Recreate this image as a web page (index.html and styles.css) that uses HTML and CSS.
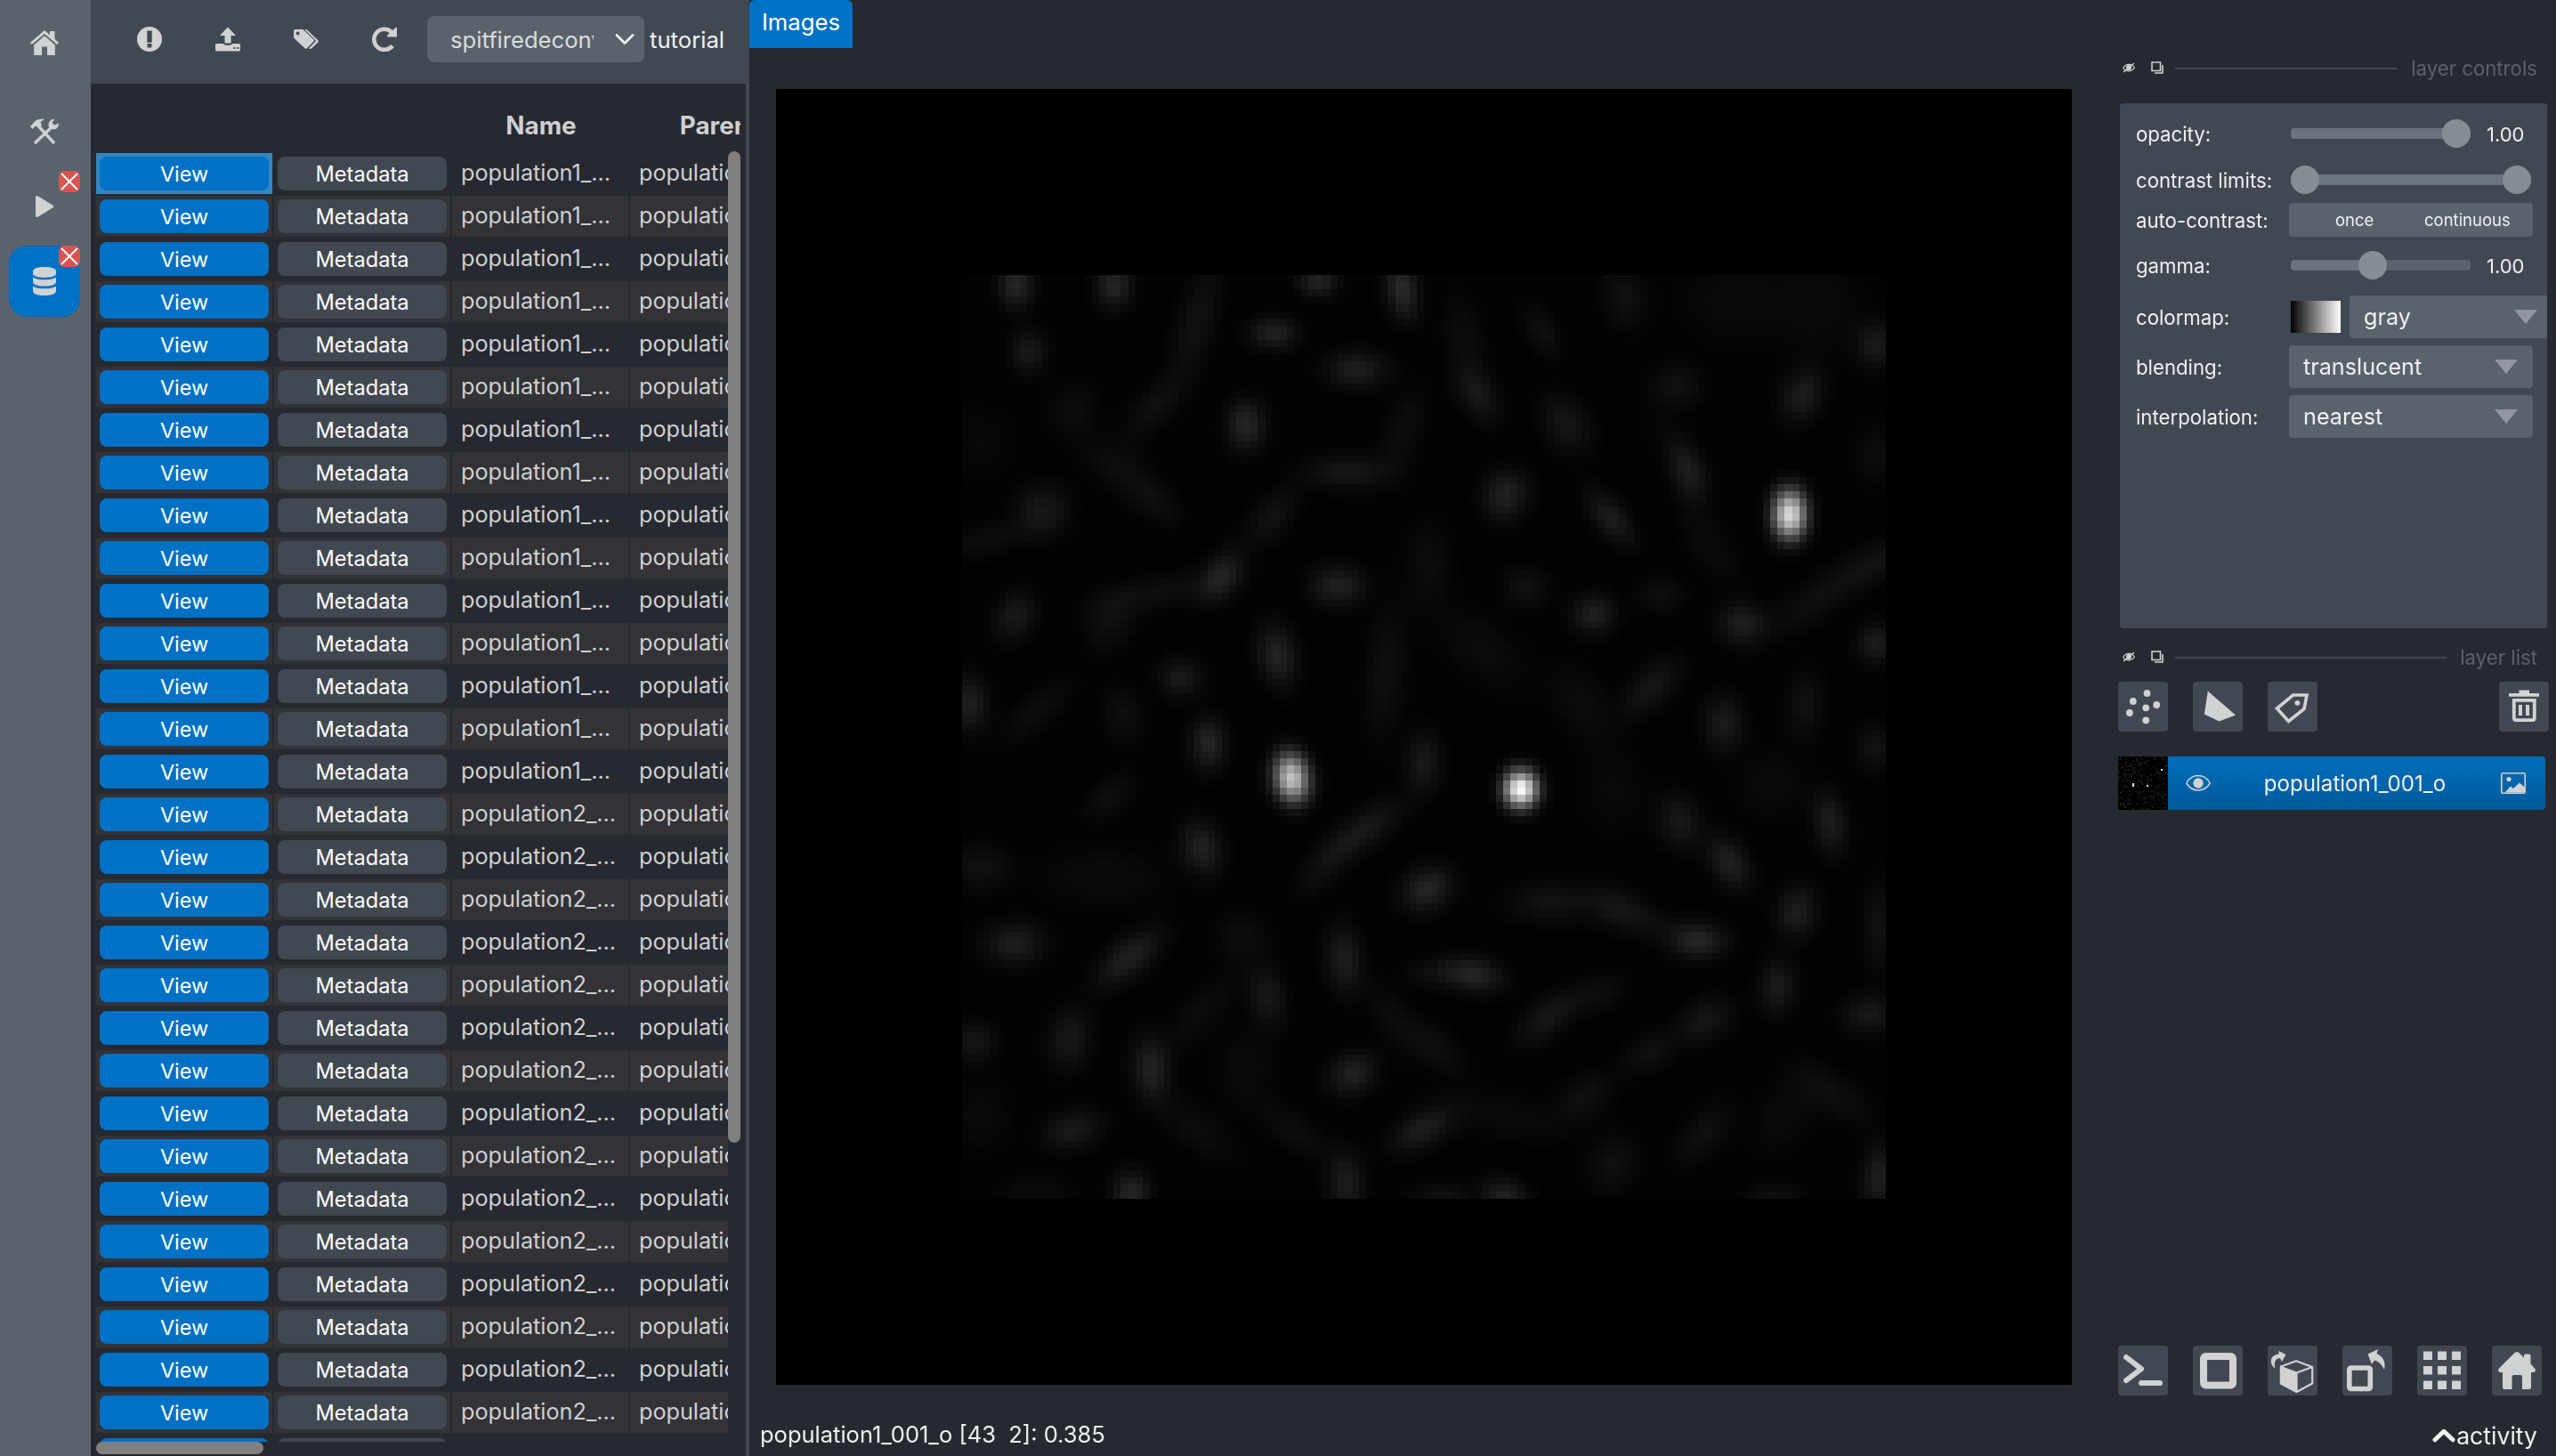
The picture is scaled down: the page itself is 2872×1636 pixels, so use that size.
FILE: index.html
```html
<!DOCTYPE html>
<html lang="en">
<head>
<meta charset="utf-8">
<title>Images</title>
<link rel="stylesheet" href="styles.css">
</head>
<body>
<nav class="sidebar">
  <div class="side-item side-home">
    <svg width="32" height="28" viewBox="0 0 32 28"><path d="M16 0l6 5.2V1h5.500v9l4.500 4-1.800 2L16 4 1.800 16 0 14z"/><path d="M16 6.200L27.800 16.500V28H19V18.500h-6V28H4.200V16.500z"/></svg>
  </div>
  <div class="side-item side-tools">
    <svg width="32" height="30" viewBox="0 0 32 30"><path d="M0 9L6 2.500Q10 .2 16 1l-4.500 3 1.500 4-3.500 3L6 8.500 2.500 12z"/><path d="M10 9.500L27 28M5 28L25 9" fill="none" stroke="#d0d0d2" stroke-width="3.400"/><path d="M27.500.8l-3 4.200 3 2.800 4.200-2.300c.8 4.500-2.700 8-8.200 6.500l-3-3C20 4 23.500.5 27.500.8z"/></svg>
  </div>
  <div class="side-item side-play">
    <span class="close"><svg width="24" height="24" viewBox="0 0 24 24"><path d="M3 3l18 18M21 3L3 21" stroke="#fff" stroke-width="2"/></svg></span>
    <svg width="20" height="24" viewBox="0 0 20 24"><path d="M0 0l3 .5 17 10.500v2L3 23.500 0 24z"/></svg>
  </div>
  <div class="side-item side-data">
    <span class="close"><svg width="24" height="24" viewBox="0 0 24 24"><path d="M3 3l18 18M21 3L3 21" stroke="#fff" stroke-width="2"/></svg></span>
    <svg width="26" height="32" viewBox="0 0 26 32"><path d="M0 4.500C0 2 5 0 13 0s13 2 13 4.500v2.800C26 10 21 12 13 12S0 10 0 7.300z"/><path d="M0 11.500C5 15.300 21 15.300 26 11.500v5.200C26 19.500 21 21.600 13 21.600S0 19.500 0 16.700zM0 21.500C5 25.300 21 25.300 26 21.500v5.500C26 30 21 32 13 32S0 30 0 27z"/></svg>
  </div>
</nav>

<section class="browser">
  <header class="toolbar">
    <div class="tools">
      <svg width="28" height="28" viewBox="0 0 28 28"><path fill-rule="evenodd" d="M14 0a14 14 0 1 1 0 28a14 14 0 1 1 0-28zM11.300 4.500v13.200h5.400V4.500zM11.600 19v4.600h4.800V19z"/></svg>
      <svg width="28" height="28" viewBox="0 0 28 28"><path d="M14 .5L23 10h-5.500v8.500h-7V10H5z"/><path fill-rule="evenodd" d="M1.500 19H9c.5 2.500 9.500 2.500 10 0h7.500q1.500 0 1.500 1.500v5.500q0 1.500-1.500 1.500h-25Q0 27.500 0 26v-5.500Q0 19 1.500 19zM20.500 23v2h2v-2zm4 0v2h2v-2z"/></svg>
      <svg width="28" height="22" viewBox="0 0 28 22"><path fill-rule="evenodd" d="M1.500 0H9.500q1 0 2 1l10.800 10.600q1 1 0 2.200l-7.500 7.500q-1 1-2.200 0L1 10.500Q0 9.500 0 8.500V1.500Q0 0 1.500 0zM4.600 2.600a2 2 0 1 0 .01 0z"/><path d="M12 0h1.500q1 0 2 1l11.800 11.200q1.200 1.200 0 2.400L20 21.600q-1 .8-2.200.2l-.5-.7 7.800-8z"/></svg>
      <svg width="28" height="28" viewBox="0 0 28 28"><path d="M23 21.500A11.600 11.600 0 1 1 22 6" fill="none" stroke="#d0d0d2" stroke-width="4.600"/><path d="M28 .8V11.500H17.500q-1.300-.6 0-2L26.500 1z"/></svg>
    </div>
    <div class="select"><span class="select-text">spitfiredeconvolution</span><svg width="22" height="12" viewBox="0 0 22 12"><path d="M2 1.500l9 9 9-9" fill="none" stroke="#f0f1f2" stroke-width="2.800" stroke-linecap="round" stroke-linejoin="round"/></svg></div>
    <span class="toolbar-label">tutorial</span>
  </header>
  <div class="table">
    <div class="thead"><span></span><span></span><span>Name</span><span>Parent</span></div>
    <div class="viewport">
      <div class="tbody" id="rows"></div>
      <div class="vscroll"><div class="vthumb"></div></div>
    </div>
    <div class="hscroll"><div class="hthumb"></div></div>
  </div>
</section>

<main class="viewer">
  <div class="tabs"><div class="tab">Images</div></div>
  <div class="canvas"><canvas class="picture" id="picture" width="128" height="128"></canvas></div>
  <div class="status">population1_001_o [43  2]: 0.385</div>
</main>

<aside class="panel">
  <div class="dock-title controls-title">
    <svg class="dock-eye" width="14" height="12" viewBox="0 0 14 12"><path d="M.7 6.500C3.500 1.200 10.500 1.200 13.300 6 10.500 11 3.500 11 .7 6.500z" fill="none" stroke="#d1d2d4" stroke-width="1.200"/><circle cx="7" cy="6" r="3"/><path d="M1 11L13 1" stroke="#d1d2d4" stroke-width="1.400"/></svg>
    <svg width="14" height="14" viewBox="0 0 14 14"><path d="M1 1h9.500v9.500H1zM4 13h9V4" fill="none" stroke="#d1d2d4" stroke-width="1.600"/></svg>
    <i class="rule"></i><span>layer controls</span>
  </div>
  <div class="controls">
    <div class="ctl r-opacity"><label>opacity:</label><div class="slider"><i class="knob end"></i></div><span class="num">1.00</span></div>
    <div class="ctl r-limits"><label>contrast limits:</label><div class="slider wide"><i class="knob"></i><i class="knob"></i></div></div>
    <div class="ctl r-auto"><label>auto-contrast:</label><div class="split"><span class="once">once</span><span class="cont">continuous</span></div></div>
    <div class="ctl r-gamma"><label>gamma:</label><div class="slider half"><i class="knob mid"></i></div><span class="num">1.00</span></div>
    <div class="ctl r-combo"><label>colormap:</label><i class="swatch"></i><div class="combo cut"><span>gray</span><i class="tri"></i></div></div>
    <div class="ctl r-combo"><label>blending:</label><div class="combo"><span>translucent</span><i class="tri"></i></div></div>
    <div class="ctl r-combo"><label>interpolation:</label><div class="combo"><span>nearest</span><i class="tri"></i></div></div>
  </div>
  <div class="dock-title list-title">
    <svg class="dock-eye" width="14" height="12" viewBox="0 0 14 12"><path d="M.7 6.500C3.500 1.200 10.500 1.200 13.300 6 10.500 11 3.500 11 .7 6.500z" fill="none" stroke="#d1d2d4" stroke-width="1.200"/><circle cx="7" cy="6" r="3"/><path d="M1 11L13 1" stroke="#d1d2d4" stroke-width="1.400"/></svg>
    <svg width="14" height="14" viewBox="0 0 14 14"><path d="M1 1h9.500v9.500H1zM4 13h9V4" fill="none" stroke="#d1d2d4" stroke-width="1.600"/></svg>
    <i class="rule"></i><span>layer list</span>
  </div>
  <div class="buttons list-buttons">
    <div class="btn"><svg viewBox="0 0 56 56"><circle cx="32.500" cy="13" r="3.900"/><circle cx="16.800" cy="22" r="3.900"/><circle cx="43.200" cy="26" r="3.900"/><circle cx="31.200" cy="29.300" r="3.900"/><circle cx="12.900" cy="35" r="3.900"/><circle cx="31.200" cy="43.300" r="3.900"/></svg></div>
    <div class="btn"><svg viewBox="0 0 56 56"><path d="M16.800 10.500L48 37.500 29.500 44.500 12.800 36.500z"/></svg></div>
    <div class="btn"><svg viewBox="0 0 56 56"><path d="M28.500 15H44l-3 15.500L23.500 44.500 10.500 30z" fill="none" stroke="#d1d2d4" stroke-width="3.600"/><circle cx="33.400" cy="23.800" r="2.900"/></svg></div>
    <div class="btn trash"><svg viewBox="0 0 56 56"><path d="M22.500 9.500h11.500v3.500h11v3.800H11V13h11.500zM22 26h4v12h-4zM30 26h4v12h-4z"/><path d="M16.800 20.800h23v20q0 2.300-2.300 2.300H19q-2.200 0-2.200-2.300z" fill="none" stroke="#d1d2d4" stroke-width="3.800"/></svg></div>
  </div>
  <div class="layer">
    <canvas class="thumb" id="thumb" width="28" height="30"></canvas>
    <svg class="eye" width="28" height="20" viewBox="0 0 28 20"><path d="M.8 10C7-1.200 21-1.200 27.200 10 21 20.500 7 20.500.8 10z" fill="none" stroke="#d1d2d4" stroke-width="1.500"/><circle cx="14" cy="10" r="5.700"/></svg>
    <span>population1_001_o</span>
    <svg width="28" height="24" viewBox="0 0 28 24"><rect x=".8" y=".8" width="26.400" height="22.400" rx="1.500" fill="none" stroke="#d1d2d4" stroke-width="1.600"/><circle cx="9" cy="7.500" r="2.600"/><path d="M4.500 22.500L11 15.500l3 2.500 7-6.500 6 5.500v5.500z"/></svg>
  </div>
  <div class="buttons viewer-buttons">
    <div class="btn"><svg viewBox="0 0 56 56"><path d="M9 13l17 13.200L9 39.200M26 42h21" fill="none" stroke="#d1d2d4" stroke-width="6" stroke-linecap="round" stroke-linejoin="round"/></svg></div>
    <div class="btn"><svg viewBox="0 0 56 56"><rect x="12" y="12" width="33" height="32.500" rx="2.500" fill="none" stroke="#d1d2d4" stroke-width="8"/></svg></div>
    <div class="btn"><svg viewBox="0 0 56 56"><path d="M8.500 26C1 20 2.500 10.500 12.500 9.500V6L20.500 10 16 18l-2-4c-5 0-7.500 5-5.500 12zM14 24.500L32.500 31v22L14 42.500z"/><path d="M14.800 23.500L32 17.200 50.200 24v18.500L32.500 52 14.800 42.500zM14.800 24L32.500 30.500 50.200 24M32.500 30.500V52" fill="none" stroke="#d1d2d4" stroke-width="2.200" stroke-linejoin="round"/></svg></div>
    <div class="btn"><svg viewBox="0 0 56 56"><rect x="7.800" y="25" width="23.500" height="23.500" rx="2" fill="none" stroke="#d1d2d4" stroke-width="5.600"/><path d="M28.500 9.500L40 4l-1.500 5C46 12 49 19 47 27 44 21 40.500 17.500 36 16.500L33 21z"/></svg></div>
    <div class="btn"><svg viewBox="0 0 56 56"><path d="M7 6.500h10v9.500H7zM23 6.500h10v9.500H23zM39 6.500h10v9.500H39zM7 23h10v9.500H7zM23 23h10v9.500H23zM39 23h10v9.500H39zM7 39.500h10V49H7zM23 39.500h10V49H23zM39 39.500h10V49H39z"/></svg></div>
    <div class="btn"><svg viewBox="0 0 56 56"><path d="M28 7q1.500 0 3 1.500l5 5V11q0-1.500 1.500-1.500h4.500q1.500 0 1.500 1.500v9.500l5 5.500q1.500 3.500-2 4H44v17q0 2-2 2H34V35q0-2-2-2h-7.500q-2 0-2 2v14H14q-2 0-2-2V30H9.500Q6 29.500 7.500 26L25 8.500Q26.500 7 28 7z"/></svg></div>
  </div>
  <div class="activity"><svg width="26" height="16" viewBox="0 0 26 16"><path d="M3 12.800L13 3.300l10 9.500" fill="none" stroke="#f0f1f2" stroke-width="5" stroke-linecap="round" stroke-linejoin="round"/></svg><span>activity</span></div>
</aside>
<script src="app.js"></script>
</body>
</html>
```
FILE: styles.css
```css
* { box-sizing: border-box; margin: 0; padding: 0; }
body {
  display: flex;
  width: 2872px;
  height: 1636px;
  overflow: hidden;
  background: #262930;
  color: #f0f1f2;
  font-family: Inter, "Liberation Sans", sans-serif;
  font-size: 25.6px;
  white-space: nowrap;
}
svg { display: block; flex: none; fill: #d1d2d4; }

/* navigation strip */
.sidebar { width: 102px; flex: none; background: #5a626c; padding: 8px 10px 0; }
.side-item { position: relative; width: 80px; height: 80px; border-radius: 20px; display: flex; align-items: center; justify-content: center; }
.side-tools { margin-top: 20px; }
.side-play { margin-top: 4px; }
.side-data { margin-top: 4px; background: #0071c5; }
.close { position: absolute; right: 0; top: 0; width: 24px; height: 24px; border-radius: 6px; background: #d9534f; }

/* data browser */
.browser { width: 740px; flex: none; display: flex; flex-direction: column; }
.toolbar { height: 94px; flex: none; background: #414851; display: flex; align-items: flex-start; padding: 18px 0 0 52px; }
.tools { display: flex; gap: 60px; width: 326px; height: 52px; align-items: center; }
.select { width: 244px; height: 52px; border-radius: 8px; background: #5a626c; display: flex; align-items: center; justify-content: space-between; padding: 0 11px 0 26px; }
.select-text { width: 161px; overflow: hidden; line-height: 53px; font-size: 25.6px; color: #dcddde; }
.toolbar-label { line-height: 53px; padding-left: 6px; font-size: 25.7px; }
.table { flex: 1; min-height: 0; border-right: 4px solid #414851; padding-left: 6px; overflow: hidden; }
.thead { display: grid; grid-template-columns: 198px 202px 200px 200px; width: 724px; height: 76px; overflow: hidden; font-weight: 700; font-size: 27.8px; line-height: 95px; text-align: center; color: #d0d0d1; }
.viewport { display: flex; width: 724px; height: 1450px; overflow: hidden; }
.tbody { width: 710px; overflow: hidden; padding-top: 2px; }
.row { display: grid; grid-template-columns: 198px 198px 198px 198px; gap: 2px; height: 46px; margin-bottom: 2px; }
.cell { padding: 4px; line-height: 44px; color: #d0d0d1; }
.row.alt .cell { background: #323237; }
.row .cell.current { background: #3485c0; }
.cell.name { padding: 0 0 0 10px; font-size: 25.2px; }
.button { height: 38px; width: 190px; border-radius: 8px; background: #414851; color: #fff; text-align: center; line-height: 39px; font-size: 23.6px; }
.button.view { background: #0071c5; font-size: 23.4px; }
.vthumb { width: 14px; height: 1114px; border-radius: 7px; background: #808080; }
.hthumb { width: 188px; height: 14px; border-radius: 7px; background: #808080; }

/* image viewer */
.viewer { width: 1534px; flex: none; display: flex; flex-direction: column; }
.tabs { height: 100px; display: flex; }
.tab { width: 116px; height: 54px; background: #0071c5; border-radius: 6px 6px 0 0; text-align: center; line-height: 50px; font-size: 25.7px; color: #fff; }
.canvas { width: 1456px; height: 1456px; margin-left: 30px; background: #000; padding: 209px 0 0 209px; }
.picture { display: block; width: 1038px; height: 1038px; image-rendering: pixelated; }
.status { padding-left: 12px; line-height: 112px; height: 80px; white-space: pre; font-size: 25.5px; }

/* docked panels */
.panel { width: 496px; flex: none; padding-top: 56px; display: flex; flex-direction: column; }
.dock-title { display: flex; align-items: center; height: 40px; padding: 0 21px 0 9px; color: #5a626c; font-size: 22.2px; }
.dock-eye { margin-right: 18px; }
.rule { flex: 1; height: 2px; margin: 1px 15px 0 13px; background: #414851; }
.controls { width: 480px; height: 590px; margin: 20px 0 0 6px; border-radius: 4px; background: #414851; overflow: hidden; }
.ctl { display: flex; align-items: center; padding-left: 18px; font-size: 22.2px; }
.ctl label { width: 172px; flex: none; }
.r-opacity { height: 68px; }
.r-limits { height: 36px; }
.r-auto { height: 38px; margin-top: 8px; }
.r-gamma { height: 50px; margin-top: 7px; }
.r-combo { height: 48px; margin-bottom: 8px; }
.r-gamma + .r-combo { margin-top: 9px; }
.slider { width: 202px; height: 12px; margin-left: 2px; border-radius: 4px; background: #6a7380; display: flex; align-items: center; justify-content: space-between; }
.slider.wide { width: 270px; }
.slider.half { background: linear-gradient(90deg, #6a7380 45%, #5a626c 45%); }
.knob { width: 32px; height: 32px; border-radius: 16px; background: #868e93; flex: none; }
.knob.end { margin-left: auto; }
.knob.mid { margin-left: 76px; }
.num { margin-left: 18px; font-size: 22px; padding-top: 1px; }
.split { width: 274px; height: 38px; border-radius: 4px; background: #5a626c; font-size: 18.500px; line-height: 39px; display: flex; }
.once { width: 100px; padding-left: 52px; }
.cont { padding-left: 52px; }
.combo { width: 274px; height: 48px; border-radius: 4px; background: #5a626c; display: flex; align-items: center; justify-content: space-between; padding: 0 17px 0 16px; font-size: 25.200px; line-height: 50px; }
.combo.cut { width: 222px; flex: none; margin-left: 10px; padding-right: 11px; border-radius: 4px 0 0 4px; }
.swatch { width: 56px; height: 36px; margin-left: 2px; background: linear-gradient(90deg, #000, #fff); flex: none; }
.tri { border: 13px solid transparent; border-top: 16px solid #9296a0; border-bottom: 0; }
.list-title { margin-top: 12px; }
.buttons { display: flex; gap: 28px; padding-left: 4px; }
.btn { width: 56px; height: 56px; border-radius: 4px; background: #414851; }
.list-buttons { margin-top: 8px; }
.trash { margin-left: 176px; }
.layer { width: 480px; height: 60px; margin: 28px 0 0 4px; display: flex; align-items: center; background: linear-gradient(#006fbd, #005a99); border-radius: 0 4px 4px 0; }
.layer span { width: 330px; text-align: center; font-size: 24.1px; margin-left: -3px; margin-right: -1px; padding-top: 1px; }
.thumb { width: 56px; height: 60px; image-rendering: pixelated; }
.eye { margin-left: 20px; }
.viewer-buttons { margin-top: 602px; }
.activity { display: flex; align-items: center; justify-content: flex-end; gap: 1px; padding-right: 21px; height: 30px; margin-top: 30px; font-size: 26.600px; }
```
FILE: app.js
```js
// Table rows: 15 images of population 1, then those of population 2.
const rows = document.getElementById('rows');
let html = '';
for (let i = 0; i < 31; i++) {
  const group = i < 15 ? 1 : 2;
  html += `<div class="row${i % 2 ? ' alt' : ''}">` +
    `<div class="cell${i === 0 ? ' current' : ''}"><div class="button view">View</div></div>` +
    '<div class="cell"><div class="button">Metadata</div></div>' +
    `<div class="cell name">population${group}_...</div>` +
    `<div class="cell name">population${group}_...</div></div>`;
}
rows.innerHTML = html;

// Spots: x, y, sigma along, sigma across, angle in degrees, brightness.
// Coordinates are on a 1508-unit square.
const spots = [
  [1350, 389, 26, 18, 90, 245], [537, 819, 26, 19, 80, 220], [911, 837, 20, 18, 90, 285],
  [87, 15, 25, 20, 90, 46], [247, 15, 25, 20, 90, 44], [580, 10, 22, 16, 0, 42], [717, 22, 32, 18, 80, 50],
  [107, 123, 24, 21, 90, 30], [508, 93, 26, 18, 0, 40], [644, 152, 34, 20, 0, 36], [462, 243, 28, 22, 90, 44],
  [840, 192, 42, 20, 60, 28], [985, 240, 42, 24, 60, 26], [945, 90, 38, 18, 60, 20], [1080, 35, 34, 24, 80, 22],
  [1370, 195, 36, 22, 115, 34], [1165, 180, 30, 24, 0, 22], [1490, 112, 26, 22, 90, 30], [1185, 325, 38, 18, 75, 28],
  [886, 357, 28, 24, 110, 40], [1058, 395, 42, 18, 50, 34], [630, 320, 60, 20, 0, 25], [130, 383, 36, 28, 150, 28],
  [505, 392, 45, 20, 130, 24], [423, 490, 32, 20, 125, 38], [612, 506, 30, 22, 0, 38], [85, 555, 28, 22, 120, 30],
  [1030, 552, 24, 22, 0, 38], [1272, 567, 26, 23, 0, 36], [920, 508, 26, 22, 0, 22], [1140, 520, 26, 20, 0, 18],
  [1490, 468, 60, 20, 150, 22], [1490, 600, 22, 20, 90, 34], [514, 619, 34, 21, 80, 42], [355, 656, 24, 22, 0, 30],
  [12, 698, 30, 20, 90, 38], [401, 763, 28, 20, 90, 44], [1125, 670, 48, 20, 135, 26], [1242, 730, 30, 22, 90, 32],
  [1375, 700, 45, 20, 95, 22], [753, 793, 32, 20, 90, 30], [1170, 890, 30, 24, 70, 28], [1252, 958, 32, 20, 60, 38],
  [1416, 893, 34, 19, 80, 34], [1490, 770, 25, 22, 90, 24], [390, 933, 30, 22, 75, 40], [655, 905, 62, 20, 145, 28],
  [590, 965, 50, 18, 130, 18], [758, 1000, 36, 23, 155, 44], [960, 1022, 60, 22, 0, 24], [1070, 1032, 42, 22, 20, 24],
  [1202, 1085, 30, 20, 0, 42], [1362, 1038, 28, 22, 100, 36], [835, 1140, 32, 19, 10, 42], [770, 1138, 40, 16, 0, 18],
  [85, 1090, 42, 24, 0, 34], [272, 1112, 52, 20, 140, 38], [622, 1115, 46, 20, 85, 34], [497, 1175, 34, 20, 80, 28],
  [455, 1078, 30, 28, 0, 16], [1330, 1160, 36, 20, 95, 32], [1212, 1215, 32, 22, 150, 26], [955, 1210, 50, 20, 140, 26],
  [1040, 1170, 40, 20, 150, 15], [1480, 1205, 30, 22, 0, 28], [1120, 1268, 40, 20, 150, 20], [175, 1245, 34, 24, 100, 28],
  [20, 1250, 24, 22, 0, 26], [307, 1293, 42, 21, 85, 40], [637, 1302, 28, 22, 150, 40], [770, 1258, 50, 20, 40, 18],
  [180, 1393, 40, 22, 165, 30], [750, 1393, 46, 20, 150, 34], [1015, 1340, 34, 22, 140, 20], [1210, 1400, 50, 22, 130, 20],
  [1062, 1448, 34, 28, 120, 20], [625, 1480, 34, 20, 85, 34], [275, 1495, 24, 20, 90, 44], [885, 1500, 26, 18, 20, 38],
  [780, 1505, 34, 16, 0, 24], [1495, 1470, 42, 18, 95, 36], [1325, 1505, 40, 16, 0, 20], [1420, 1335, 60, 22, 35, 18],
  [540, 1395, 60, 20, 35, 16], [1495, 1060, 60, 18, 90, 22], [30, 965, 30, 26, 0, 22], [240, 850, 40, 20, 140, 18],
  [262, 715, 40, 22, 80, 18], [120, 710, 60, 20, 140, 16], [690, 650, 90, 24, 95, 19], [380, 80, 90, 22, 105, 22],
  [310, 215, 50, 20, 130, 20], [250, 310, 50, 26, 30, 16], [310, 365, 45, 20, 40, 18], [40, 430, 60, 18, 165, 16],
  [320, 515, 90, 18, 170, 18], [240, 565, 40, 26, 120, 20], [850, 610, 70, 34, 40, 14], [760, 470, 60, 26, 90, 15],
  [1220, 440, 60, 24, 60, 13], [1390, 530, 70, 22, 145, 18], [1010, 700, 60, 30, 60, 14], [720, 250, 60, 22, 110, 16],
  [820, 100, 60, 24, 80, 14], [180, 220, 40, 30, 90, 15], [1265, 40, 80, 50, 0, 12], [1400, 50, 60, 60, 0, 11],
  [1060, 840, 60, 40, 90, 10], [1320, 830, 50, 40, 120, 12], [230, 980, 90, 34, 0, 13], [390, 1200, 70, 22, 130, 14],
  [380, 1390, 70, 24, 40, 14], [880, 1370, 90, 26, 10, 12], [30, 1370, 40, 40, 0, 12], [1340, 1370, 60, 30, 120, 13],
  [1490, 290, 40, 24, 90, 16], [460, 1290, 40, 40, 0, 13], [1170, 290, 60, 22, 50, 13], [700, 1210, 60, 20, 60, 12],
  [25, 270, 50, 40, 0, 9], [120, 1500, 50, 24, 0, 14], [1130, 1060, 60, 18, 20, 14]
];
const size = 128, scale = 1508 / size;
const ctx = document.getElementById('picture').getContext('2d');
const image = ctx.createImageData(size, size);
for (let py = 0; py < size; py++) {
  for (let px = 0; px < size; px++) {
    const x = (px + 0.5) * scale - 1, y = (py + 0.5) * scale - 2;
    let value = 1.5;
    for (const [cx, cy, sa, sb, angle, level] of spots) {
      const t = angle * Math.PI / 180, dx = x - cx, dy = y - cy;
      const stretch = sa > 35 ? 0.82 : 1;
      const u = (dx * Math.cos(t) + dy * Math.sin(t)) / (sa * stretch);
      const v = (dy * Math.cos(t) - dx * Math.sin(t)) / sb;
      const d = u * u + v * v;
      const gain = level > 60 ? 0.88 : level < 25 ? 0.68 : 0.8;
      if (d < 14) value += level * gain * Math.exp(-d / 2);
    }
    const k = (py * size + px) * 4;
    image.data[k] = image.data[k + 1] = image.data[k + 2] = Math.min(255, value);
    image.data[k + 3] = 255;
  }
}
ctx.putImageData(image, 0, 0);

// Layer thumbnail: faint noise with the three bright particles.
const tctx = document.getElementById('thumb').getContext('2d');
let seed = 7;
for (let y = 0; y < 30; y++) {
  for (let x = 0; x < 28; x++) {
    seed = (seed * 16807) % 2147483647;
    const n = Math.floor(Math.pow(seed / 2147483647, 4) * 30);
    tctx.fillStyle = `rgb(${n},${n},${n})`;
    tctx.fillRect(x, y, 1, 1);
  }
}
tctx.fillStyle = '#ddd';
tctx.fillRect(8, 15, 1, 2);
tctx.fillRect(16, 16, 1, 1);
tctx.fillRect(24, 7, 1, 1);
```
